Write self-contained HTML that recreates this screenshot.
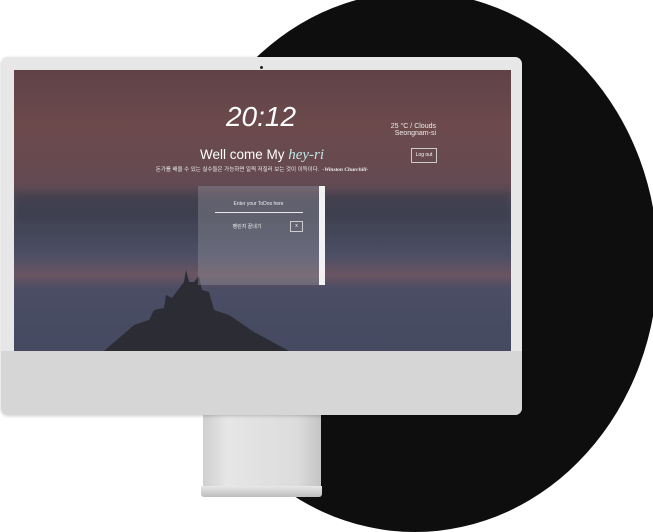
<!DOCTYPE html>
<html><head><meta charset="utf-8"><style>
html,body{margin:0;padding:0;width:653px;height:528px;overflow:hidden;background:#fff;font-family:"Liberation Sans","Noto Sans CJK KR",sans-serif}
.abs{position:absolute}
</style></head><body>
<div class="abs" style="left:172px;top:-8px;width:486px;height:540px;border-radius:50%;background:#0e0e0e"></div>
<!-- stand -->
<div class="abs" style="left:203px;top:412px;width:118px;height:76px;background:linear-gradient(90deg,#cfcfcf,#e6e6e6 20%,#dcdcdc 80%,#c4c4c4)"></div>
<div class="abs" style="left:201px;top:486px;width:121px;height:11px;background:linear-gradient(#e8e8e8,#bdbdbd);border-radius:0 0 3px 3px"></div>
<!-- monitor -->
<div class="abs" style="left:1px;top:57px;width:521px;height:358px;background:#e7e7e7;border-radius:7px;box-shadow:0 1px 3px rgba(0,0,0,.2)"></div>
<div class="abs" style="left:1px;top:351px;width:521px;height:64px;background:#d6d6d6;border-radius:0 0 7px 7px"></div>
<div class="abs" style="left:260px;top:66px;width:3px;height:3px;border-radius:50%;background:#222"></div>
<div class="abs" style="left:14px;top:70px;width:497px;height:281px;overflow:hidden;background:linear-gradient(180deg,#5f4248 0%,#6c4a4c 20%,#644a52 40%,#4e4c5e 48%,#434657 58%,#4d4f66 66%,#6a5561 73%,#4a4d64 78%,#454a61 100%)">
 <div class="abs" style="left:0;top:122px;width:497px;height:30px;background:rgba(40,42,55,.35);filter:blur(4px)"></div>
 <svg class="abs" style="left:0;top:0" width="497" height="281"><path d="M90 281 L120 255 L135 250 L140 240 L150 238 L152 225 L158 228 L170 212 L172 200 L175 212 L180 212 L185 206 L188 220 L195 222 L200 240 L215 245 L240 262 L275 281Z" fill="#2c2c34"/></svg>
 <div class="abs" style="left:0;top:46px;width:497px;text-align:center;color:#fff;font-size:0"></div>
</div>
<div class="abs" style="left:200px;top:101px;width:122px;text-align:center;color:#fff;font-style:italic;font-size:28px;line-height:32px">20:12</div>
<div class="abs" style="left:370px;top:123px;width:66px;text-align:right;color:#eee;font-size:7px;line-height:7px">25 °C / Clouds<br>Seongnam-si</div>
<div class="abs" style="left:170px;top:146px;width:184px;text-align:center;color:#fff;font-size:13.5px;line-height:18px">Well come My <span style="font-family:'Liberation Serif',serif;font-style:italic;color:#bfe8e6;font-size:15px">hey-ri</span></div>
<div class="abs" style="left:411px;top:148px;width:24px;height:13px;border:1px solid #ccc;color:#fff;font-size:5px;line-height:13px;text-align:center">Log out</div>
<div class="abs" style="left:140px;top:166px;width:244px;text-align:center;color:#eee;font-size:5.5px;line-height:8px">돈가를 배울 수 있는 실수들은 가능하면 일찍 저질러 보는 것이 이득이다. &nbsp;<i style="font-family:'Liberation Serif',serif;font-weight:bold">-Winston Churchill-</i></div>
<div class="abs" style="left:198px;top:186px;width:121px;height:99px;background:rgba(150,150,160,.38)"></div>
<div class="abs" style="left:319px;top:186px;width:6px;height:99px;background:#f2f2f2"></div>
<div class="abs" style="left:198px;top:201px;width:121px;text-align:center;color:#eee;font-size:5px">Enter your ToDos here</div>
<div class="abs" style="left:215px;top:212px;width:88px;height:1px;background:#e8e8e8"></div>
<div class="abs" style="left:225px;top:223px;width:44px;text-align:center;color:#eee;font-size:5px">팽린지 끝내기</div>
<div class="abs" style="left:290px;top:221px;width:11px;height:9px;border:1px solid #ccc;color:#fff;font-size:5px;line-height:9px;text-align:center">x</div>
</body></html>
